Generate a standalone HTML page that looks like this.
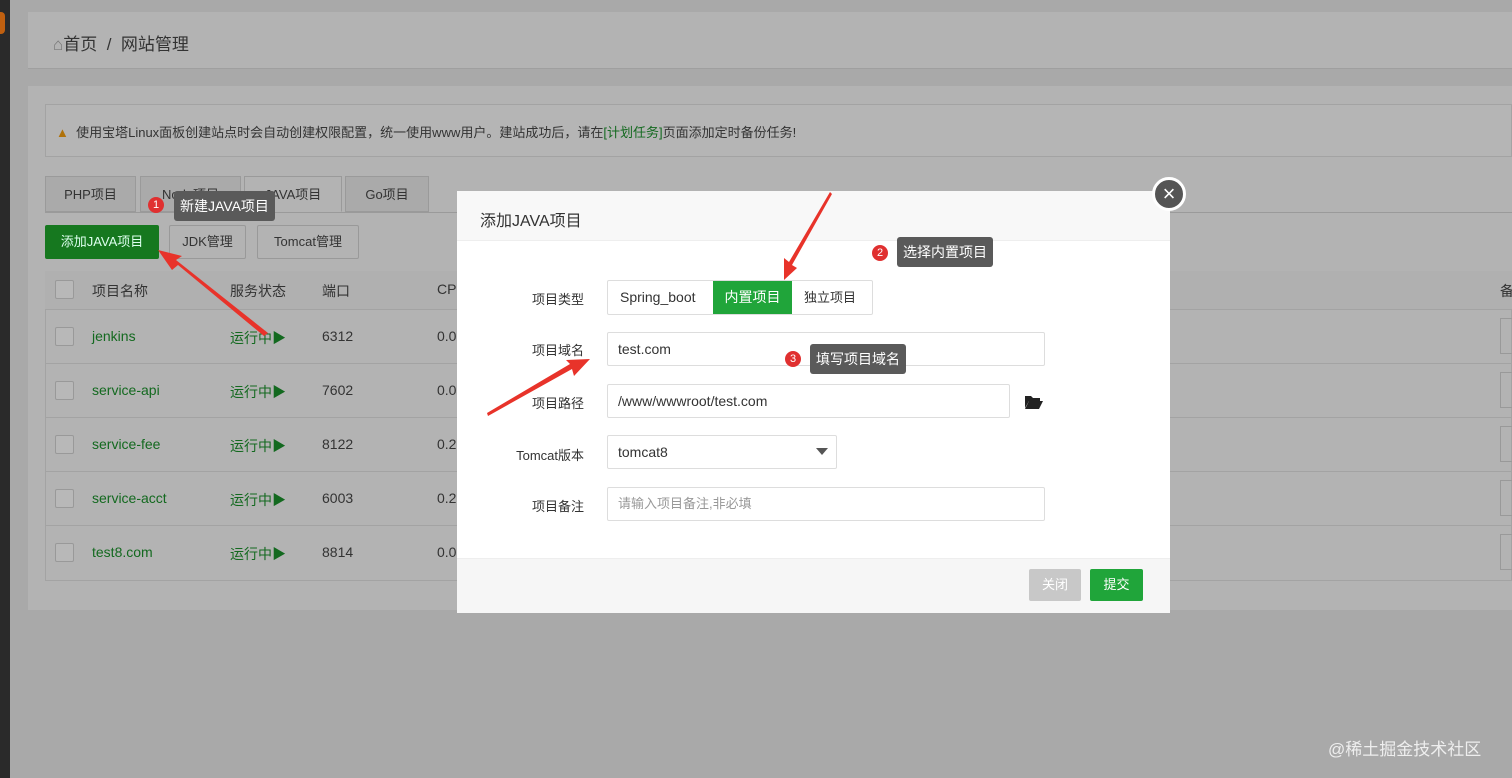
<!DOCTYPE html>
<html><head><meta charset="utf-8"><style>
*{margin:0;padding:0;box-sizing:border-box}
body{width:1512px;height:778px;overflow:hidden;background:#a9a9a9;font-family:"Liberation Sans","Noto Sans CJK SC",sans-serif;font-size:14px;color:#333;position:relative}
.abs{position:absolute}
.side{left:0;top:0;width:10px;height:778px;background:#2a2a2a}
.panel{background:#b3b3b3}
.tab{position:absolute;top:176px;height:36px;border:1px solid #9a9a9a;background:#aaaaaa;color:#333;font-size:13px;line-height:36px;text-align:center}
.btn{position:absolute;top:225px;height:34px;border:1px solid #999;border-radius:2px;line-height:32px;font-size:13px;text-align:center;color:#333}
.row{position:absolute;left:45px;width:1480px;height:54px;border-top:1px solid #a3a3a3;font-size:14px}
.row span{position:absolute;top:18px}
.cb{position:absolute;left:10px;top:17px;width:19px;height:19px;border:1px solid #999;background:#b8b8b8;border-radius:2px}
.g{color:#13691f}
.tip{position:absolute;background:#5a5a5a;color:#fff;font-size:14px;height:30px;line-height:30px;padding:0 6px;border-radius:3px}
.num{position:absolute;width:16px;height:16px;border-radius:50%;background:#e03030;color:#fff;font-size:11px;line-height:16px;text-align:center}
.modal{left:457px;top:191px;width:713px;height:422px;background:#fff}
.lbl{position:absolute;width:130px;text-align:right;font-size:13px;color:#333}
.inp{position:absolute;height:34px;border:1px solid #ddd;border-radius:2px;font-size:14px;line-height:32px;padding-left:10px;color:#333}
</style></head><body>
<div class="abs side"></div>
<div class="abs" style="left:0;top:12px;width:5px;height:22px;background:#c06010;border-radius:0 4px 4px 0"></div>
<div class="abs panel" style="left:28px;top:12px;width:1484px;height:57px;border-bottom:1px solid #9f9f9f"></div>
<div class="abs" style="left:53px;top:30px;font-size:17px;color:#333"><span style="color:#777">⌂</span>首页 &nbsp;/ &nbsp;网站管理</div>
<div class="abs panel" style="left:28px;top:86px;width:1484px;height:524px"></div>
<div class="abs" style="left:45px;top:104px;width:1467px;height:53px;border:1px solid #a3a3a3;background:#b5b5b5"></div>
<div class="abs" style="left:56px;top:122px;font-size:13px;color:#333"><span style="color:#b0720a">▲</span>&nbsp; 使用宝塔Linux面板创建站点时会自动创建权限配置，统一使用www用户。建站成功后，请在<span class="g">[计划任务]</span>页面添加定时备份任务!</div>
<div class="tab" style="left:45px;width:91px">PHP项目</div>
<div class="tab" style="left:140px;width:101px">Node项目</div>
<div class="tab" style="left:244px;width:98px;background:#b3b3b3;border-bottom-color:#b3b3b3">JAVA项目</div>
<div class="tab" style="left:345px;width:84px">Go项目</div>
<div class="abs" style="left:45px;top:212px;width:1467px;border-top:1px solid #9a9a9a"></div>
<div class="btn" style="left:45px;width:114px;background:#16781f;border-color:#16781f;color:#dfe;">添加JAVA项目</div>
<div class="btn" style="left:169px;width:77px">JDK管理</div>
<div class="btn" style="left:257px;width:102px">Tomcat管理</div>
<div class="abs" style="left:45px;top:271px;width:1467px;height:310px;border:1px solid #a3a3a3"></div>
<div class="row" style="top:271px;height:38px;border-top:none;background:#b0b0b0"><div class="cb" style="top:9px"></div><span style="left:47px;top:10px">项目名称</span><span style="left:185px;top:10px">服务状态</span><span style="left:277px;top:10px">端口</span><span style="left:392px;top:10px">CPU</span><span style="left:1455px;top:10px">备</span></div>
<div class="row" style="top:309px"><div class="cb"></div><span class="g" style="left:47px">jenkins</span><span class="g" style="left:185px">运行中▶</span><span style="left:277px">6312</span><span style="left:392px">0.0</span></div>
<div class="row" style="top:363px"><div class="cb"></div><span class="g" style="left:47px">service-api</span><span class="g" style="left:185px">运行中▶</span><span style="left:277px">7602</span><span style="left:392px">0.0</span></div>
<div class="row" style="top:417px"><div class="cb"></div><span class="g" style="left:47px">service-fee</span><span class="g" style="left:185px">运行中▶</span><span style="left:277px">8122</span><span style="left:392px">0.2</span></div>
<div class="row" style="top:471px"><div class="cb"></div><span class="g" style="left:47px">service-acct</span><span class="g" style="left:185px">运行中▶</span><span style="left:277px">6003</span><span style="left:392px">0.2</span></div>
<div class="row" style="top:525px"><div class="cb"></div><span class="g" style="left:47px">test8.com</span><span class="g" style="left:185px">运行中▶</span><span style="left:277px">8814</span><span style="left:392px">0.0</span></div>
<div class="abs" style="left:1500px;top:318px;width:20px;height:36px;border:1px solid #999"></div>
<div class="abs" style="left:1500px;top:372px;width:20px;height:36px;border:1px solid #999"></div>
<div class="abs" style="left:1500px;top:426px;width:20px;height:36px;border:1px solid #999"></div>
<div class="abs" style="left:1500px;top:480px;width:20px;height:36px;border:1px solid #999"></div>
<div class="abs" style="left:1500px;top:534px;width:20px;height:36px;border:1px solid #999"></div>
<div class="num" style="left:148px;top:197px">1</div>
<div class="tip" style="left:174px;top:191px">新建JAVA项目</div>

<div class="abs modal">
<div style="height:50px;background:#f8f8f8;border-bottom:1px solid #eee;padding:16px 0 0 23px;font-size:16px;color:#333">添加JAVA项目</div>
<div class="lbl" style="left:0;top:98px;width:127px">项目类型</div>
<div class="abs" style="left:150px;top:89px;width:266px;height:35px;border:1px solid #ddd;border-radius:2px;font-size:14px;line-height:33px">
 <span class="abs" style="left:12px">Spring_boot</span>
 <span class="abs" style="left:105px;width:79px;height:33px;background:#20a53a;color:#fff;text-align:center">内置项目</span>
 <span class="abs" style="left:196px;font-size:13px">独立项目</span>
</div>
<div class="lbl" style="left:0;top:149px;width:127px">项目域名</div>
<div class="inp" style="left:150px;top:141px;width:438px">test.com</div>
<div class="lbl" style="left:0;top:202px;width:127px">项目路径</div>
<div class="inp" style="left:150px;top:193px;width:403px">/www/wwwroot/test.com</div>
<svg class="abs" style="left:567px;top:204px" width="19" height="14" viewBox="0 0 19 14"><path d="M1 1h6l2 2h7v3H5L1 13z" fill="#222"/><path d="M5 6h14l-4 8H1z" fill="#222"/></svg>
<div class="lbl" style="left:0;top:254px;width:127px">Tomcat版本</div>
<div class="inp" style="left:150px;top:244px;width:230px">tomcat8<span class="abs" style="right:8px;top:12px;border:6px solid transparent;border-top:7px solid #555"></span></div>
<div class="lbl" style="left:0;top:305px;width:127px">项目备注</div>
<div class="inp" style="left:150px;top:296px;width:438px;color:#999;font-size:13px">请输入项目备注,非必填</div>
<div class="abs" style="left:0;top:367px;width:713px;height:55px;background:#f6f6f6;border-top:1px solid #eee"></div>
<div class="abs" style="left:572px;top:378px;width:52px;height:32px;background:#c8c8c8;color:#fff;font-size:13px;line-height:32px;text-align:center;border-radius:2px">关闭</div>
<div class="abs" style="left:633px;top:378px;width:53px;height:32px;background:#20a53a;color:#fff;font-size:13px;line-height:32px;text-align:center;border-radius:2px">提交</div>
</div>
<div class="abs" style="left:1152px;top:177px;width:34px;height:34px;border-radius:50%;background:#555;border:3px solid #fff;color:#fff;font-size:22px;line-height:27px;text-align:center">×</div>
<div class="num" style="left:872px;top:245px">2</div>
<div class="tip" style="left:897px;top:237px">选择内置项目</div>
<div class="num" style="left:785px;top:351px">3</div>
<div class="tip" style="left:810px;top:344px">填写项目域名</div>
<svg class="abs" style="left:0;top:0" width="1512" height="778">
<g fill="#e8332a">
<polygon points="268,333 264,336 178,265 172,270 158,250 182,256 176,260"/>
<polygon points="830,192 832,194 792,265 797,268 784,280 784,258 789,262"/>
<polygon points="488,416 487,413 570,364 566,360 590,359 574,376 572,369"/>
</g></svg>
<div class="abs" style="left:1328px;top:735px;font-size:17px;color:#eee">@稀土掘金技术社区</div>
</body></html>
